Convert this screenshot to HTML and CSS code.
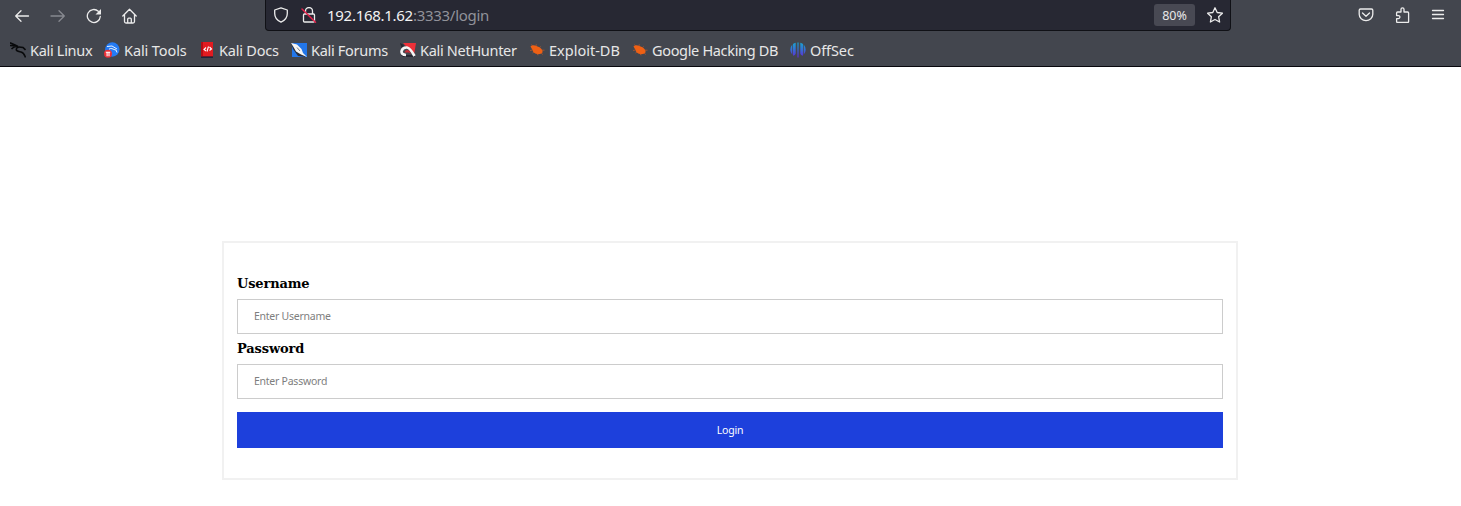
FILE: index.html
```html
<!DOCTYPE html>
<html lang="en">
<head>
<meta charset="utf-8">
<title>Login</title>
<link rel="stylesheet" href="styles.css">
</head>
<body>
<header class="chrome">
  <div class="toolbar">
    <nav class="nav">
      <svg class="icon" viewBox="0 0 16 16"><path d="M14.500 8H1.700M7 2.700 1.700 8 7 13.300"/></svg>
      <svg class="icon dim" viewBox="0 0 16 16"><path d="M1 8h13.300M9 2.700 14.300 8 9 13.300"/></svg>
      <svg class="icon" viewBox="0 0 16 16"><path d="M14.300 8.500A6.500 6.500 0 1 1 12.300 3.300"/><path class="solid" d="M15 1v5.500H9.500z"/></svg>
      <svg class="icon" viewBox="0 0 16 16"><path d="M.8 8 7.500 1.300 14.200 8M2.500 6.700v6.800q0 1.500 1.500 1.500h7q1.500 0 1.500-1.500V6.700M5.700 15v-3.800q0-1 1-1h1.600q1 0 1 1V15"/></svg>
    </nav>
    <div class="urlbar">
      <svg class="icon shield" viewBox="0 0 16 16"><path d="M8 .8 14.300 3v3.500c0 4-2.500 7-6.300 8.700C4.200 13.500 1.700 10.500 1.700 6.500V3z"/></svg>
      <svg class="icon lock" viewBox="0 0 16 16"><path d="M4.500 7V4a3.500 3.500 0 0 1 7 0v3M3.500 7h9q1 0 1 1v6q0 1-1 1h-9q-1 0-1-1V8q0-1 1-1z"/><path class="slash" d="m1 2 13.500 13.200"/></svg>
      <span class="url">192.168.1.62<span class="path">:3333/login</span></span>
      <span class="zoom">80%</span>
      <svg class="icon star" viewBox="0 0 16 16"><path d="m8 .8 2.200 4.700 5.200.7-3.800 3.500 1 5.300L8 12.500 3.400 15l1-5.300L.6 6.200l5.200-.7z"/></svg>
    </div>
    <div class="actions">
      <svg class="icon" viewBox="0 0 16 16"><path d="M2.500 2h11q1.300 0 1.300 1.300v4a6.800 6.300 0 0 1-13.600 0v-4Q1.200 2 2.500 2zM4.500 6 8 9.200 11.500 6"/></svg>
      <svg class="icon" viewBox="0 0 16 16"><path d="M3.500 5H7V2.300a1.500 1.500 0 0 1 3 0V5h3.700q.9 0 .9.900v8.700q0 .9-.9.900H3.500q-.9 0-.9-.9v-3h1.800a1.500 1.500 0 0 0 0-3H2.600V5.900q0-.9.900-.9z"/></svg>
      <svg class="icon menu" viewBox="0 0 16 16"><path d="M2.500 3.500h11M2.500 7.500h11M2.500 11.500h11"/></svg>
    </div>
  </div>
  <nav class="bookmarks">
    <a class="bm b1"><svg viewBox="0 0 16 16"><path class="dragon" d="M0 .8 5 3l3 1.500M0 3.500l7 .5M1.500 7C4 4.500 7 4 9 5.500M8 4.500C4 9 8 9.500 11 10s3.500 3 4.500 5.500M9 5l4 .5 2.500 2.500"/></svg><span>Kali Linux</span></a>
    <a class="bm b2"><svg viewBox="0 0 16 16"><circle cx="8.300" cy="7.500" r="7.200" fill="#247bf4"/><path class="wave thin" d="M3 4.500 8 4l5 3M5 7.200c2-1.500 4-.2 5 .3l2 .5 1 2.500"/><circle cx="4" cy="11.700" r="4" fill="#ed2f36"/><path class="wave" d="M1.800 10.200h4.400M3.100 10.200v4M5 10.200v4"/></svg><span>Kali Tools</span></a>
    <a class="bm b3"><svg viewBox="0 0 16 16"><path fill="#b40c13" d="M2 0h12v16H2z"/><path fill="#e21b20" d="M4 0h10v14H4z"/><path fill="#20253b" d="M2 14.500h12V16H2z"/><path class="wave" d="M7 5.500 5 7.500l2 1.500M10.500 5l2 2-2 1.500M9.500 4.500 8 9.500"/></svg><span>Kali Docs</span></a>
    <a class="bm b4"><svg viewBox="0 0 16 16"><path fill="#2376e8" d="M1 1h15v14H1z"/><path fill="#292c38" d="m0 1 15 14-8-1-5-7z"/><path fill="#f5f5f5" d="m0 1 6 1.500L10.500 7l1.500 4 4 4-6-2.500L5 9.500 2.500 5z"/><path d="m6 5.500 3 3.500" stroke="#777c85"/></svg><span>Kali Forums</span></a>
    <a class="bm b5"><svg viewBox="0 0 16 16"><path fill="#ed3038" d="M3 1h13l-2 12z"/><path fill="#252631" d="m0 1 4 2-2 4zM1 13h13l1 2H3z"/><path d="M6 13C-1 13 1 5 7 5.500c3 .3 5 4 7.500 8.500" fill="none" stroke="#f4f4f4" stroke-width="2.700"/><path fill="#c92a35" d="M4.500 10.500Q6 6.500 9.500 9l1.500 3-2-1.500z"/></svg><span>Kali NetHunter</span></a>
    <a class="bm b6"><svg viewBox="0 0 16 16"><use href="#beetle"/></svg><span>Exploit-DB</span></a>
    <a class="bm b7"><svg viewBox="0 0 16 16"><g id="beetle"><path class="bug" d="M1.500 4.500Q3 2.500 6 3.500l4.500 1.700q3.500 2.300 3 5.300-2 2.200-5.500 1.500Q4 11 3.500 8z"/><path class="legs" d="m4 4-1.500-1.500M7 4l.3-1.700M10.500 5.500l1.200-1M13 8.200h2.500M12 11l1.800 1.500M8 11.500l1 1.800M5 10l-1.500 1M3.500 8 1 8.500"/></g></svg><span>Google Hacking DB</span></a>
    <a class="bm b8"><svg viewBox="0 0 16 16"><defs><linearGradient id="offsec" gradientUnits="userSpaceOnUse" x1="0" y1="0" x2="0" y2="16"><stop stop-color="#16a8cf"/><stop offset=".5" stop-color="#386bd4"/><stop offset="1" stop-color="#6322d5"/></linearGradient></defs><path fill="url(#offsec)" d="M2.300 2.500v10.300Q.3 10.500.3 7.700t2-5.200zM3 2Q4.200 1 5.700.7v10.800q-.2 2-2.700 2.200zM7.400.5h1.200v15H7.400zM10.300.7Q11.800 1 13 2v11.700q-2.500-.2-2.700-2.200zM13.700 2.500q2 2.300 2 5.200t-2 5.100z"/></svg><span>OffSec</span></a>
  </nav>
</header>
<main class="page">
  <form class="login">
    <label class="label" for="user">Username</label>
    <input class="field" id="user" type="text" placeholder="Enter Username">
    <label class="label" for="pass">Password</label>
    <input class="field" id="pass" type="password" placeholder="Enter Password">
    <button class="submit" type="button">Login</button>
  </form>
</main>
</body>
</html>
```
FILE: styles.css
```css
* { box-sizing: border-box; }
body { margin: 0; height: 506px; overflow: hidden; background: #fff; }
.chrome { height: 67px; background: #43464e; border-bottom: 1px solid #08080d; font-family: "Noto Sans", sans-serif; color: #e7e7e7; }
.toolbar { display: flex; height: 31px; }
.nav { display: flex; gap: 20px; width: 265px; padding: 8px 0 0 14px; }
.icon { display: block; flex: none; width: 16px; height: 16px; fill: none; stroke: #ececec; stroke-width: 1.3; stroke-linecap: round; stroke-linejoin: round; }
.icon .solid { fill: #ececec; stroke: none; }
.icon .slash { stroke: #e3224b; stroke-width: 1.5; }
.dim { stroke: #878990; }
.urlbar { display: flex; align-items: center; width: 966px; height: 31px; padding: 0 7px; background: #272833; border: 1px solid #101116; border-top: 0; border-radius: 0 0 4px 4px; }
.lock { margin-left: 12px; }
.url { margin-left: 10px; font-size: 15px; line-height: 30px; letter-spacing: -.28px; color: #f3f3f3; white-space: nowrap; }
.path { color: #91929a; }
.zoom { width: 41px; height: 22px; margin: 0 12px 0 auto; border-radius: 3px; background: #484953; font-size: 12.5px; line-height: 23px; text-align: center; }
.actions { display: flex; gap: 20px; padding: 7px 0 0 127px; }
.bookmarks { display: flex; height: 35px; padding: 3px 0 0 10px; font-size: 14.5px; line-height: 31px; letter-spacing: -.3px; }
.bm { display: flex; flex: none; align-items: center; gap: 4px; height: 32px; white-space: nowrap; }
.bm svg { flex: none; width: 16px; height: 16px; }
.b1 { width: 94px; }
.b2 { width: 95px; letter-spacing: -.1px; }
.b3 { width: 92px; letter-spacing: -.2px; }
.b4 { width: 109px; }
.b5 { width: 129px; }
.b6 { width: 103px; letter-spacing: 0; }
.b7 { width: 158px; letter-spacing: -.33px; }
.b8 { letter-spacing: -.1px; }
.dragon { fill: none; stroke: #08090b; stroke-width: 1.6; }
.wave { fill: none; stroke: #fff; stroke-width: 1.1; }
.thin { stroke-width: .9; }
.bug { fill: #ef6014; }
.legs { fill: none; stroke: #c25a26; stroke-width: .7; }
.page { padding: 174px 223px 0 222px; }
.login { height: 239px; padding: 33px 13px 0; border: 2px solid #f1f1f1; }
.label { display: block; height: 15px; margin-bottom: 8px; font: bold 13px/15px "DejaVu Serif", serif; letter-spacing: -.15px; color: #000; }
.field, .submit { display: block; width: 100%; border-radius: 0; font: 10.5px "Noto Sans", sans-serif; letter-spacing: -.25px; }
.field { height: 35px; margin: 0 0 7px; padding: 0 16px 2px; border: 1px solid #ccc; background: #fff; }
.field::placeholder { color: #7e7e7e; opacity: 1; }
.submit { height: 36px; margin-top: 13px; padding: 0; border: 0; background: #1d40dc; color: #fff; }
```
